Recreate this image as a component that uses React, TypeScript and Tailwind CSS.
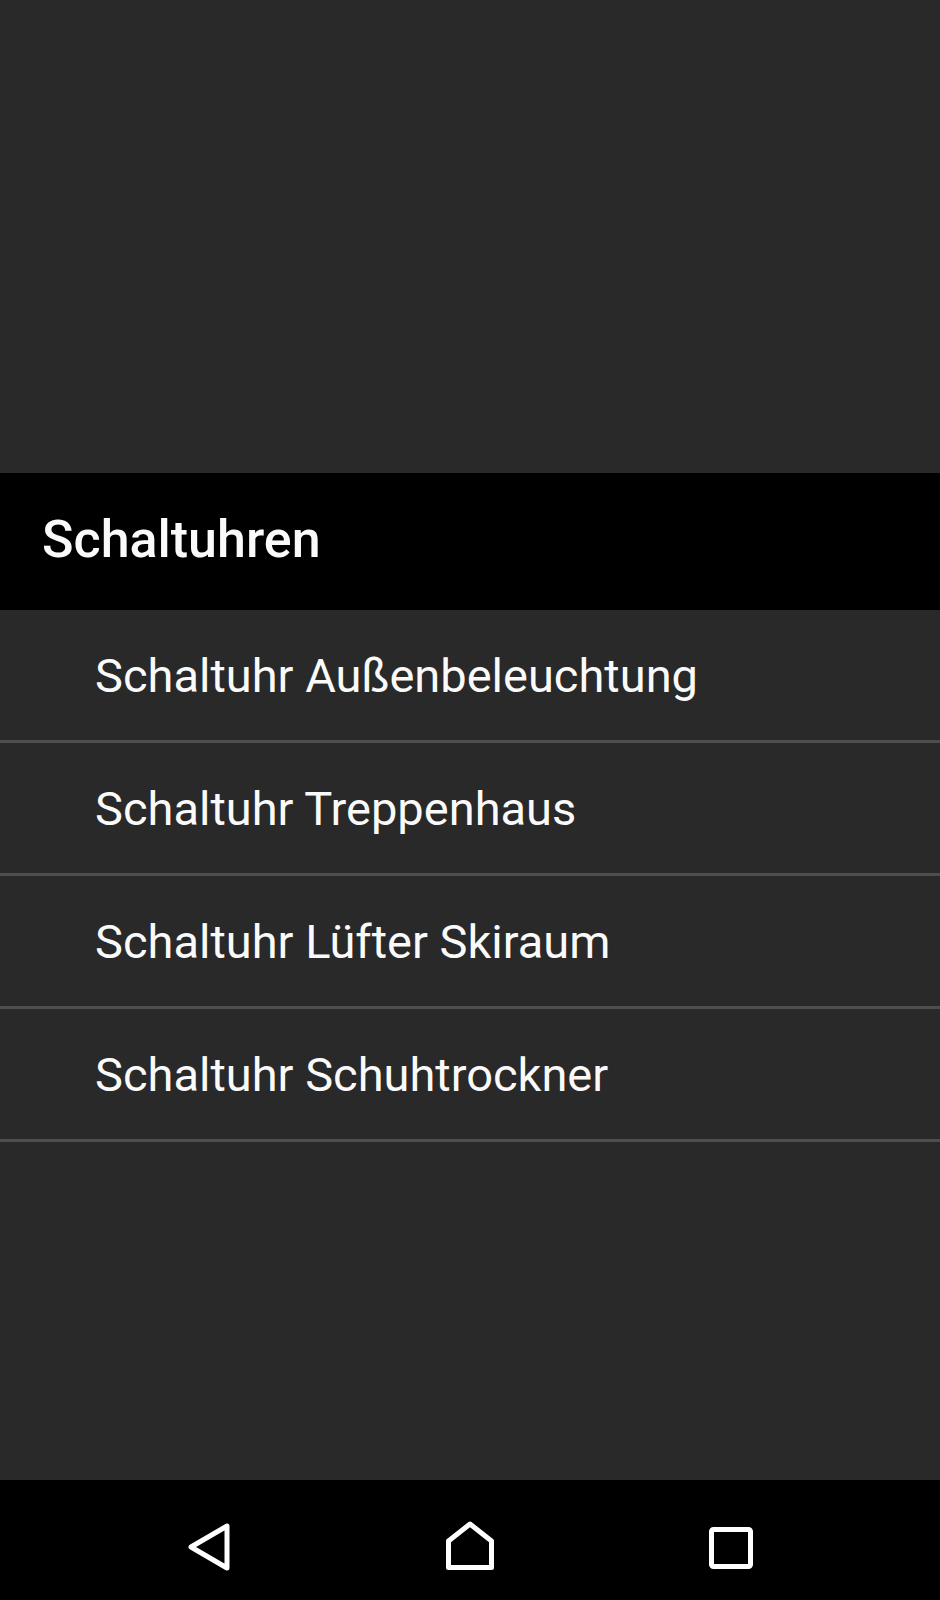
import React from 'react';

const timers = [
  'Schaltuhr Außenbeleuchtung',
  'Schaltuhr Treppenhaus',
  'Schaltuhr Lüfter Skiraum',
  'Schaltuhr Schuhtrockner',
];

function NavButton({ children }: { children: React.ReactNode }) {
  return (
    <div className="w-[60px] h-[60px]">
      <svg width="60" height="60" viewBox="0 0 60 60" fill="none" stroke="white" strokeWidth="5" strokeLinejoin="round" strokeLinecap="round">
        {children}
      </svg>
    </div>
  );
}

export default function App() {
  return (
    <div className="w-[940px] h-[1600px] flex flex-col bg-[#292929] text-[#fafafa] font-['Roboto','Liberation_Sans',sans-serif]">
      <div className="h-[473px]" />

      <div className="h-[137px] bg-black flex items-center px-[42px]">
        <h1 className="text-[52px] font-medium leading-none -mt-[4px]">Schaltuhren</h1>
      </div>

      <ul>
        {timers.map((name) => (
          <li key={name} className="h-[133px] flex items-center pl-[95px] border-b-[3px] border-[#4e4e4e] text-[47px] leading-none">
            {name}
          </li>
        ))}
      </ul>

      <div className="flex-1" />

      <nav className="h-[120px] bg-black flex justify-center gap-[201px] pt-[36px]">
        <NavButton>
          <path d="M12 31 L48 10 L48 52 Z" />
        </NavButton>
        <NavButton>
          <path d="M30 8 L51.5 25 L51.5 51.5 L8.5 51.5 L8.5 25 Z" />
        </NavButton>
        <NavButton>
          <rect x="10.5" y="13.5" width="39" height="37" rx="2" />
        </NavButton>
      </nav>
    </div>
  );
}
